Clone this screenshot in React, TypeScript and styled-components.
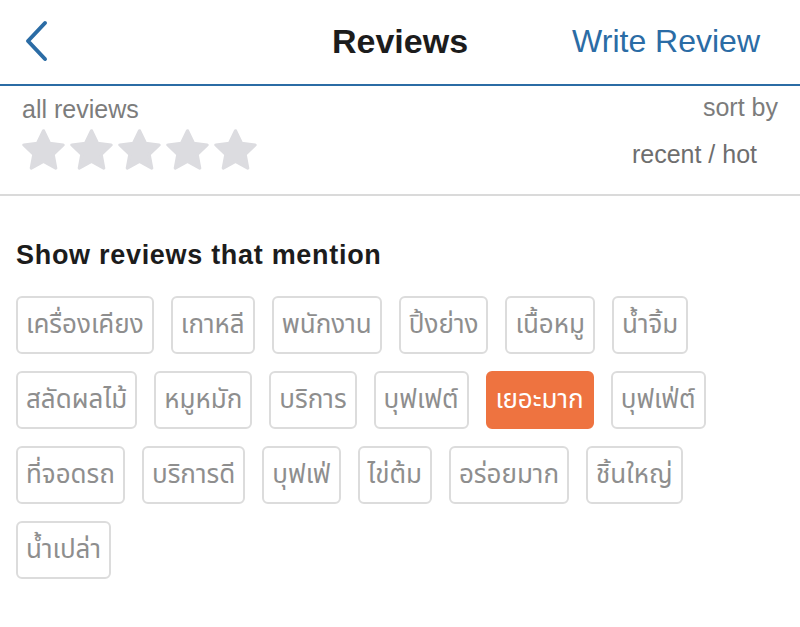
import React, { useState } from 'react';
import styled, { createGlobalStyle } from 'styled-components';

const BLUE = '#2b6ca5';

const GlobalStyle = createGlobalStyle`
    html, body {
        margin: 0;
        padding: 0;
        background: #fff;
    }
    body {
        font-family: 'Liberation Sans', 'Noto Sans', 'Noto Sans Thai', 'Loma', sans-serif;
        -webkit-font-smoothing: antialiased;
    }
`;

const Page = styled.div`
    width: 800px;
    min-height: 627px;
    background: #fff;
`;

const Header = styled.header`
    display: grid;
    grid-template-columns: 1fr auto 1fr;
    align-items: center;
    height: 86px;
    padding: 0 24px 2px;
    border-bottom: 2px solid ${BLUE};
    box-sizing: border-box;
`;

const BackButton = styled.button`
    justify-self: start;
    display: flex;
    align-items: center;
    padding: 0;
    border: none;
    background: none;
    cursor: pointer;
`;

const Title = styled.h1`
    margin: 0;
    font-size: 34px;
    font-weight: 700;
    color: #1c1c1c;
`;

const HeaderAction = styled.a`
    justify-self: end;
    margin-right: 16px;
    font-size: 32px;
    color: ${BLUE};
    text-decoration: none;
`;

const RatingBar = styled.section`
    display: flex;
    justify-content: space-between;
    height: 110px;
    padding: 0 22px;
    border-bottom: 2px solid #dadada;
    box-sizing: border-box;
`;

const FilterColumn = styled.div`
    display: flex;
    flex-direction: column;
    padding-top: 9px;
`;

const MutedLabel = styled.span`
    font-size: 25px;
    color: #7c7c7c;
    line-height: 28px;
`;

const StarRow = styled.div`
    display: flex;
    gap: 5px;
    margin-top: 6px;
`;

const SortColumn = styled.div`
    display: flex;
    flex-direction: column;
    align-items: flex-end;
    padding-top: 7px;
`;

const SortOptions = styled.span`
    margin-top: 19px;
    margin-right: 21px;
    font-size: 25px;
    color: #6e6e6e;
    line-height: 28px;
`;

const MentionSection = styled.section`
    padding: 43px 16px 0;
`;

const SectionTitle = styled.h2`
    margin: 0 0 25px;
    font-size: 27px;
    font-weight: 700;
    color: #1c1c1c;
    letter-spacing: 0.7px;
    line-height: 32px;
`;

const ChipList = styled.div`
    display: flex;
    flex-wrap: wrap;
    gap: 17px;
`;

const Chip = styled.button<{ $active: boolean }>`
    height: 58px;
    padding: 0 8px;
    border-radius: 6px;
    border: 2px solid ${({ $active }) => ($active ? '#ee7340' : '#dcdcdc')};
    background: ${({ $active }) => ($active ? '#ee7340' : '#fff')};
    color: ${({ $active }) => ($active ? '#fff' : '#8e8e8e')};
    font-family: 'Noto Sans Thai', 'Noto Sans', 'Loma', 'Garuda', sans-serif;
    font-size: 26px;
    cursor: pointer;
    box-sizing: border-box;
`;

const Star = () => (
    <svg width='43' height='42' viewBox='1 0.9 22 21.6'>
        <path
            d='M12 1.8l3.1 6.4 7 .9-5.1 4.9 1.3 7-6.3-3.4-6.3 3.4 1.3-7L1.9 9.1l7-.9z'
            fill='#dcdce0'
            stroke='#dcdce0'
            strokeWidth='1.6'
            strokeLinejoin='round'
        />
    </svg>
);

const ChevronLeft = () => (
    <svg width='26' height='42' viewBox='0 0 26 42'>
        <polyline points='21,3 4,21 21,39' fill='none' stroke={BLUE} strokeWidth='4' strokeLinecap='round' strokeLinejoin='round' />
    </svg>
);

const tags = [
    'เครื่องเคียง',
    'เกาหลี',
    'พนักงาน',
    'ปิ้งย่าง',
    'เนื้อหมู',
    'น้ำจิ้ม',
    'สลัดผลไม้',
    'หมูหมัก',
    'บริการ',
    'บุฟเฟต์',
    'เยอะมาก',
    'บุฟเฟ่ต์',
    'ที่จอดรถ',
    'บริการดี',
    'บุฟเฟ่',
    'ไข่ต้ม',
    'อร่อยมาก',
    'ชิ้นใหญ่',
    'น้ำเปล่า',
];

export default function App() {
    const [selected, setSelected] = useState(10);

    return (
        <Page>
            <GlobalStyle />
            <Header>
                <BackButton aria-label='Back'>
                    <ChevronLeft />
                </BackButton>
                <Title>Reviews</Title>
                <HeaderAction href='#'>Write Review</HeaderAction>
            </Header>
            <RatingBar>
                <FilterColumn>
                    <MutedLabel>all reviews</MutedLabel>
                    <StarRow>
                        {[0, 1, 2, 3, 4].map((i) => (
                            <Star key={i} />
                        ))}
                    </StarRow>
                </FilterColumn>
                <SortColumn>
                    <MutedLabel>sort by</MutedLabel>
                    <SortOptions>recent / hot</SortOptions>
                </SortColumn>
            </RatingBar>
            <MentionSection>
                <SectionTitle>Show reviews that mention</SectionTitle>
                <ChipList>
                    {tags.map((tag, i) => (
                        <Chip key={i} $active={i === selected} onClick={() => setSelected(i)}>
                            {tag}
                        </Chip>
                    ))}
                </ChipList>
            </MentionSection>
        </Page>
    );
}
